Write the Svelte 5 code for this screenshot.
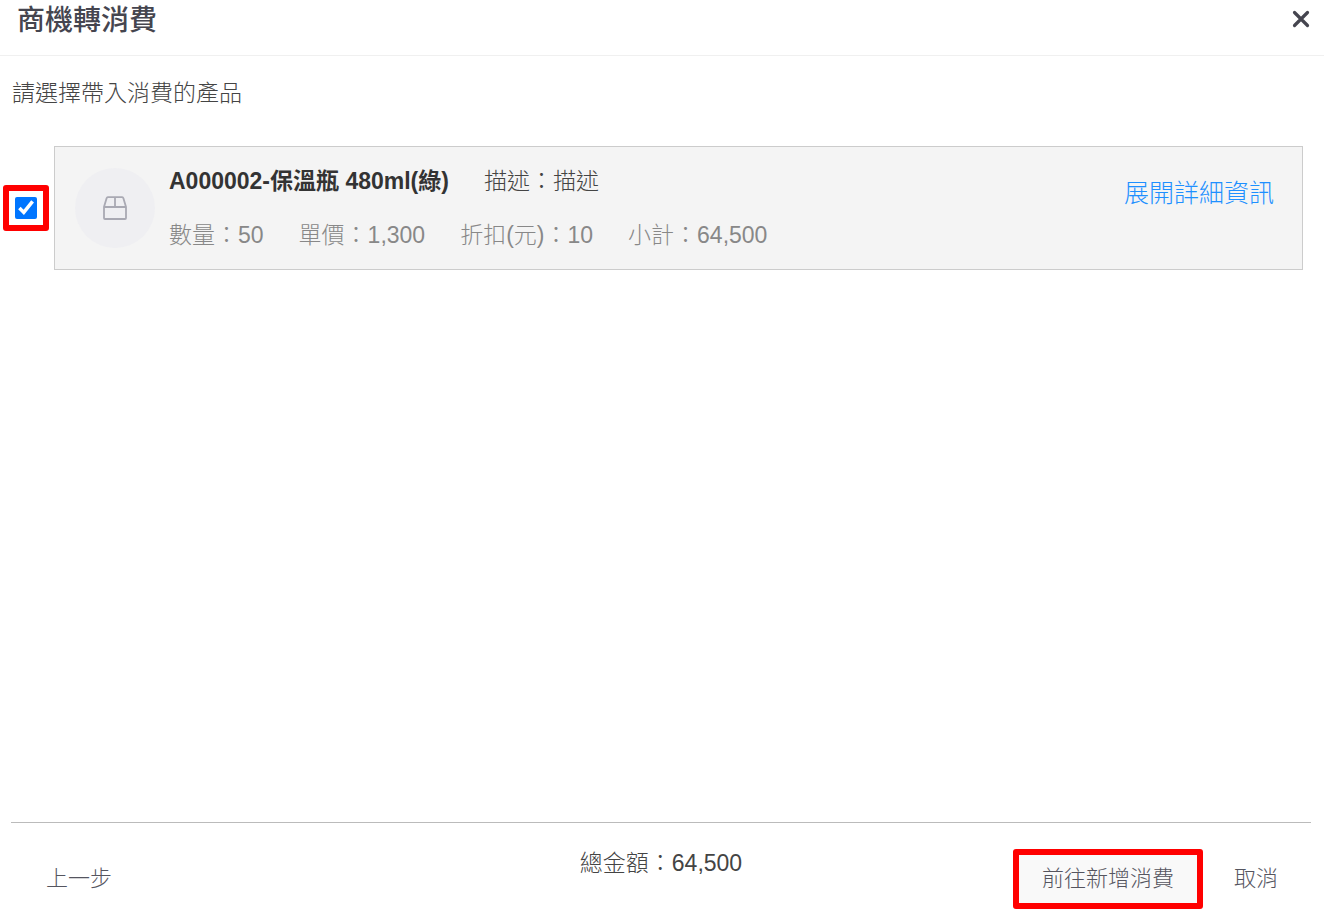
<script lang="ts">
	interface Product {
		id: string;
		name: string;
		description: string;
		quantity: number;
		price: number;
		discount: number;
		selected: boolean;
	}

	let products = $state<Product[]>([
		{
			id: 'A000002',
			name: '保溫瓶 480ml(綠)',
			description: '描述',
			quantity: 50,
			price: 1300,
			discount: 10,
			selected: true
		}
	]);

	const format = (value: number) => value.toLocaleString('en-US');
	const subtotal = (p: Product) => (p.price - p.discount) * p.quantity;

	const total = $derived(
		products.filter((p) => p.selected).reduce((sum, p) => sum + subtotal(p), 0)
	);
</script>

<div class="dialog" lang="zh-Hant">
	<header class="header">
		<h1>商機轉消費</h1>
		<button class="close" aria-label="關閉">
			<svg viewBox="0 0 18 18" width="18" height="18" aria-hidden="true">
				<path d="M2.5 2.5l13 13M15.5 2.5l-13 13" />
			</svg>
		</button>
	</header>

	<main class="content">
		<p class="prompt">請選擇帶入消費的產品</p>

		{#each products as product (product.id)}
			<div class="row">
				<label class="pick">
					<input
						type="checkbox"
						aria-label="{product.id}-{product.name}"
						bind:checked={product.selected}
					/>
				</label>
				<article class="card">
					<div class="avatar">
						<svg viewBox="0 0 24 24" width="24" height="24" aria-hidden="true">
							<path d="M1 11V22a1 1 0 0 0 1 1h20a1 1 0 0 0 1-1V11L20.4 2.2a1.4 1.4 0 0 0-1.3-1H4.9a1.4 1.4 0 0 0-1.3 1zM1 11h22M12 1.2V11" />
						</svg>
					</div>
					<div class="info">
						<div class="line">
							<strong>{product.id}-{product.name}</strong>
							<span>描述：{product.description}</span>
						</div>
						<div class="line muted">
							<span>數量：{product.quantity}</span>
							<span>單價：{format(product.price)}</span>
							<span>折扣(元)：{product.discount}</span>
							<span>小計：{format(subtotal(product))}</span>
						</div>
					</div>
					<a class="expand" href="#detail">展開詳細資訊</a>
				</article>
			</div>
		{/each}
	</main>

	<footer class="footer">
		<div class="side">
			<button class="plain">上一步</button>
		</div>
		<p class="total">總金額：{format(total)}</p>
		<div class="side end">
			<button class="primary">前往新增消費</button>
			<button class="plain">取消</button>
		</div>
	</footer>
</div>

<style>
	:global(body) {
		margin: 0;
		background: #fff;
	}

	.dialog {
		box-sizing: border-box;
		display: flex;
		flex-direction: column;
		min-height: 100vh;
		font-family: 'Liberation Sans', 'Noto Sans CJK TC', sans-serif;
		font-size: 23px;
		font-weight: 300;
		line-height: 28px;
		color: #444;
	}

	.header {
		display: flex;
		align-items: flex-start;
		justify-content: space-between;
		padding: 1px 14px 14px 17px;
		border-bottom: 1px solid #f0f0f0;
	}

	h1 {
		margin: 0;
		font-size: 28px;
		font-weight: 500;
		line-height: 40px;
		color: #45454f;
	}

	button {
		padding: 0;
		border: none;
		background: none;
		font: inherit;
		color: inherit;
		cursor: pointer;
	}

	.close {
		display: flex;
		margin-top: 9px;
	}

	.close path {
		fill: none;
		stroke: #45454f;
		stroke-width: 3.2;
		stroke-linecap: round;
	}

	.content {
		flex: 1;
		padding: 23px 21px 23px 3px;
	}

	.prompt {
		margin: 0 0 39px 9px;
	}

	.row {
		display: flex;
		align-items: center;
		gap: 5px;
	}

	.pick {
		display: flex;
		padding: 6px;
		border: 6px solid #f00;
		border-radius: 3px;
	}

	.pick input {
		width: 22px;
		height: 22px;
		margin: 0;
		accent-color: #0075ff;
	}

	.card {
		flex: 1;
		display: flex;
		align-items: center;
		gap: 14px;
		padding: 20px 28px 20px 20px;
		border: 1px solid #ccc;
		background: #f4f4f4;
	}

	.avatar {
		display: flex;
		align-items: center;
		justify-content: center;
		flex: none;
		width: 80px;
		height: 80px;
		border-radius: 50%;
		background: #efeff2;
	}

	.avatar path {
		fill: none;
		stroke: #a9a9b3;
		stroke-width: 1.8;
	}

	.info {
		flex: 1;
		display: flex;
		flex-direction: column;
		gap: 26px;
	}

	.line {
		display: flex;
		gap: 35px;
	}

	.line strong {
		font-weight: 600;
		color: #333;
	}

	.muted {
		color: #888;
	}

	.expand {
		align-self: flex-start;
		margin-top: 12px;
		font-size: 25px;
		color: #1e90ff;
		text-decoration: none;
	}

	.footer {
		display: grid;
		grid-template-columns: 1fr auto 1fr;
		margin: 0 13px 0 11px;
		padding: 26px 0 1px;
		border-top: 1px solid #bbb;
	}

	.side {
		display: flex;
		align-items: center;
		gap: 31px;
		padding-left: 35px;
		font-size: 22px;
		color: #55555f;
	}

	.side.end {
		justify-content: flex-end;
		padding: 0 33px 0 0;
	}

	.total {
		margin: 0;
	}

	.primary {
		padding: 10px 23px;
		border: 6px solid #f00;
		border-radius: 3px;
		background: #f9f9f9;
	}
</style>
